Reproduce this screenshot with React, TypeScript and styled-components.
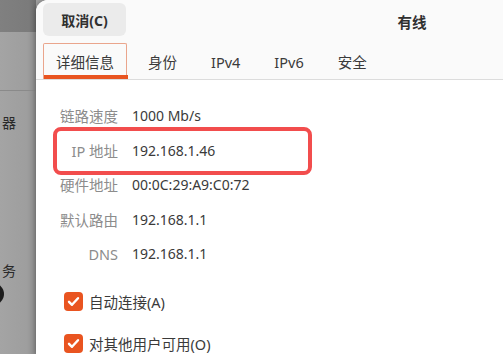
import React from "react";
import styled, { createGlobalStyle } from "styled-components";

const GlobalStyle = createGlobalStyle`
  html, body {
    margin: 0;
    padding: 0;
    width: 503px;
    height: 354px;
    overflow: hidden;
    background: #a0a0a0;
  }
  body {
    font-family: "Noto Sans", "Noto Sans CJK SC", sans-serif;
  }
`;

const Screen = styled.div`
  display: flex;
  width: 503px;
  height: 354px;
  overflow: hidden;
`;

const Backdrop = styled.div`
  flex: 0 0 36px;
  display: flex;
  flex-direction: column;
  overflow: hidden;
  background: linear-gradient(to right, #a4a4a4 0%, #9e9e9e 75%, #8c8c8c 100%);
`;

const BackdropBar = styled.div`
  height: 32px;
  background: linear-gradient(to right, #808080 0%, #7b7b7b 80%, #6e6e6e 100%);
`;

const BackdropDivider = styled.div`
  margin-top: 58px;
  height: 1px;
  background: #8a8a8a;
`;

const BackdropText = styled.div<{ $gap: number }>`
  margin-top: ${(p) => p.$gap}px;
  padding-left: 2px;
  font-size: 14px;
  line-height: 14px;
  color: #2a2a2a;
`;

const BackdropKnob = styled.div`
  margin: 5px 0 0 -18px;
  width: 22px;
  height: 22px;
  border-radius: 50%;
  background: #1c1c1c;
`;

const Dialog = styled.div`
  position: relative;
  flex: 0 0 752px;
  background: #ffffff;
  border-top-left-radius: 12px;
  overflow: hidden;
  box-shadow: -1px 0 4px rgba(0, 0, 0, 0.25);
`;

const Header = styled.div`
  background: #fafafa;
  border-bottom: 1px solid #dcdcdc;
`;

const TopRow = styled.div`
  height: 40px;
  display: grid;
  grid-template-columns: 1fr auto 1fr;
  align-items: center;
  padding: 0 7px;
`;

const CancelButton = styled.button`
  justify-self: start;
  align-self: start;
  margin-top: 3px;
  width: 83px;
  height: 33px;
  border: none;
  border-radius: 6px;
  background: #ebebeb;
  color: #303030;
  font-family: inherit;
  font-size: 14px;
  font-weight: 700;
  padding: 0;
`;

const Title = styled.div`
  font-size: 14.5px;
  font-weight: 700;
  color: #303030;
  padding-top: 2px;
`;

const TabBar = styled.div`
  display: flex;
  height: 39px;
  padding-left: 3px;
`;

const Tab = styled.div<{ $active?: boolean }>`
  position: relative;
  display: flex;
  align-items: center;
  padding: 4px 17px 0;
  font-size: 14.5px;
  color: #3a3a3a;

  ${(p) =>
    p.$active &&
    `
    &::before {
      content: "";
      position: absolute;
      top: 3px;
      left: 4px;
      right: 4px;
      bottom: 0;
      border: 1px solid #eaa58c;
      border-bottom: none;
      border-radius: 2px 2px 0 0;
    }
    &::after {
      content: "";
      position: absolute;
      left: 5px;
      right: 3px;
      bottom: 0;
      height: 4px;
      background: #e95420;
    }
  `}
`;

const Content = styled.div`
  padding: 26px 0 0 24px;
`;

const InfoGrid = styled.div`
  display: grid;
  grid-template-columns: max-content 1fr;
  column-gap: 14px;
  row-gap: 14.5px;
  line-height: 20px;
`;

const Label = styled.div`
  text-align: right;
  font-size: 14.5px;
  color: #8c8c8c;
`;

const Value = styled.div`
  font-size: 14px;
  color: #3a3a3a;
`;

const CheckList = styled.div`
  display: flex;
  flex-direction: column;
  gap: 14px;
  margin: 23px 0 0 4px;
`;

const CheckRow = styled.label`
  display: flex;
  align-items: center;
  gap: 6px;
  height: 28px;
  font-size: 14.5px;
  color: #3a3a3a;
`;

const CheckBox = styled.span`
  display: inline-flex;
  width: 19px;
  height: 19px;
  border-radius: 4px;
  background: #e95420;
`;

const Highlight = styled.div`
  position: absolute;
  left: 17px;
  top: 127px;
  width: 259px;
  height: 48px;
  box-sizing: border-box;
  border: 4px solid #f24d4d;
  border-radius: 8px;
  pointer-events: none;
`;

const rows: [string, string][] = [
  ["链路速度", "1000 Mb/s"],
  ["IP 地址", "192.168.1.46"],
  ["硬件地址", "00:0C:29:A9:C0:72"],
  ["默认路由", "192.168.1.1"],
  ["DNS", "192.168.1.1"],
];

const tabs = ["详细信息", "身份", "IPv4", "IPv6", "安全"];

function Check() {
  return (
    <CheckBox>
      <svg width="19" height="19" viewBox="0 0 19 19">
        <path
          d="M5 9.8l3 3 6-6.6"
          fill="none"
          stroke="#fff"
          strokeWidth="2.4"
          strokeLinecap="round"
          strokeLinejoin="round"
        />
      </svg>
    </CheckBox>
  );
}

function App() {
  return (
    <>
      <GlobalStyle />
      <Screen>
        <Backdrop>
          <BackdropBar />
          <BackdropDivider />
          <BackdropText $gap={25}>器</BackdropText>
          <BackdropText $gap={134}>务</BackdropText>
          <BackdropKnob />
        </Backdrop>
        <Dialog>
          <Header>
            <TopRow>
              <CancelButton>取消(C)</CancelButton>
              <Title>有线</Title>
              <span />
            </TopRow>
            <TabBar>
              {tabs.map((t, i) => (
                <Tab key={t} $active={i === 0}>
                  {t}
                </Tab>
              ))}
            </TabBar>
          </Header>
          <Content>
            <InfoGrid>
              {rows.map(([k, v]) => (
                <React.Fragment key={k}>
                  <Label>{k}</Label>
                  <Value>{v}</Value>
                </React.Fragment>
              ))}
            </InfoGrid>
            <CheckList>
              <CheckRow>
                <Check />
                自动连接(A)
              </CheckRow>
              <CheckRow>
                <Check />
                对其他用户可用(O)
              </CheckRow>
            </CheckList>
          </Content>
          <Highlight />
        </Dialog>
      </Screen>
    </>
  );
}

export default App;
